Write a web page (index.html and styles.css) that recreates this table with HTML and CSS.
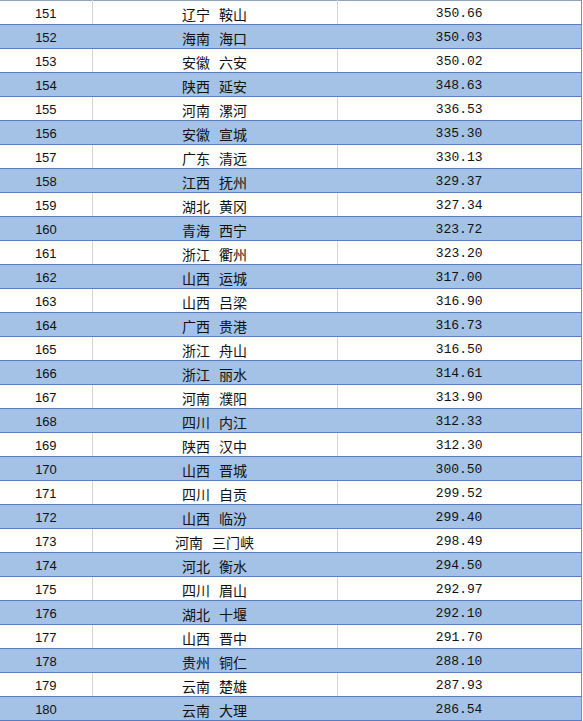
FILE: index.html
```html
<!DOCTYPE html>
<html>
<head>
<meta charset="utf-8">
<link rel="stylesheet" href="styles.css">
</head>
<body>
<table class="grid">
<tbody>
<tr class="w"><td class="rank">151</td><td class="city">辽宁 鞍山</td><td class="val">350.66</td></tr>
<tr class="b"><td class="rank">152</td><td class="city">海南 海口</td><td class="val">350.03</td></tr>
<tr class="w"><td class="rank">153</td><td class="city">安徽 六安</td><td class="val">350.02</td></tr>
<tr class="b"><td class="rank">154</td><td class="city">陕西 延安</td><td class="val">348.63</td></tr>
<tr class="w"><td class="rank">155</td><td class="city">河南 漯河</td><td class="val">336.53</td></tr>
<tr class="b"><td class="rank">156</td><td class="city">安徽 宣城</td><td class="val">335.30</td></tr>
<tr class="w"><td class="rank">157</td><td class="city">广东 清远</td><td class="val">330.13</td></tr>
<tr class="b"><td class="rank">158</td><td class="city">江西 抚州</td><td class="val">329.37</td></tr>
<tr class="w"><td class="rank">159</td><td class="city">湖北 黄冈</td><td class="val">327.34</td></tr>
<tr class="b"><td class="rank">160</td><td class="city">青海 西宁</td><td class="val">323.72</td></tr>
<tr class="w"><td class="rank">161</td><td class="city">浙江 衢州</td><td class="val">323.20</td></tr>
<tr class="b"><td class="rank">162</td><td class="city">山西 运城</td><td class="val">317.00</td></tr>
<tr class="w"><td class="rank">163</td><td class="city">山西 吕梁</td><td class="val">316.90</td></tr>
<tr class="b"><td class="rank">164</td><td class="city">广西 贵港</td><td class="val">316.73</td></tr>
<tr class="w"><td class="rank">165</td><td class="city">浙江 舟山</td><td class="val">316.50</td></tr>
<tr class="b"><td class="rank">166</td><td class="city">浙江 丽水</td><td class="val">314.61</td></tr>
<tr class="w"><td class="rank">167</td><td class="city">河南 濮阳</td><td class="val">313.90</td></tr>
<tr class="b"><td class="rank">168</td><td class="city">四川 内江</td><td class="val">312.33</td></tr>
<tr class="w"><td class="rank">169</td><td class="city">陕西 汉中</td><td class="val">312.30</td></tr>
<tr class="b"><td class="rank">170</td><td class="city">山西 晋城</td><td class="val">300.50</td></tr>
<tr class="w"><td class="rank">171</td><td class="city">四川 自贡</td><td class="val">299.52</td></tr>
<tr class="b"><td class="rank">172</td><td class="city">山西 临汾</td><td class="val">299.40</td></tr>
<tr class="w"><td class="rank">173</td><td class="city">河南 三门峡</td><td class="val">298.49</td></tr>
<tr class="b"><td class="rank">174</td><td class="city">河北 衡水</td><td class="val">294.50</td></tr>
<tr class="w"><td class="rank">175</td><td class="city">四川 眉山</td><td class="val">292.97</td></tr>
<tr class="b"><td class="rank">176</td><td class="city">湖北 十堰</td><td class="val">292.10</td></tr>
<tr class="w"><td class="rank">177</td><td class="city">山西 晋中</td><td class="val">291.70</td></tr>
<tr class="b"><td class="rank">178</td><td class="city">贵州 铜仁</td><td class="val">288.10</td></tr>
<tr class="w"><td class="rank">179</td><td class="city">云南 楚雄</td><td class="val">287.93</td></tr>
<tr class="b"><td class="rank">180</td><td class="city">云南 大理</td><td class="val">286.54</td></tr>
</tbody>
</table>
</body>
</html>
```
FILE: styles.css
```css
html, body {
  margin: 0;
  padding: 0;
  background: #ffffff;
}
.grid {
  border-collapse: collapse;
  width: 582px;
  table-layout: fixed;
  border-top: 1px solid #8ea3c4;
  border-right: 1px solid #6f8fc0;
}
.grid td {
  height: 24px;
  padding: 3px 0 0 0;
  box-sizing: border-box;
  text-align: center;
  vertical-align: middle;
  color: #111;
  border-bottom: 1px solid #5a7cc0;
  line-height: 16px;
}
.rank {
  width: 92px;
  font-family: "Liberation Sans", Arial, sans-serif;
  font-size: 13px;
}
.city {
  width: 245px;
  font-family: "Noto Sans CJK SC", sans-serif;
  font-size: 14px;
  word-spacing: 6px;
}
.val {
  font-family: "Liberation Mono", monospace;
  font-size: 13px;
}
.w td {
  background: #ffffff;
}
.w td + td {
  border-left: 1px solid #d4d4d4;
}
.b td {
  background: #a3c2e6;
}
```
